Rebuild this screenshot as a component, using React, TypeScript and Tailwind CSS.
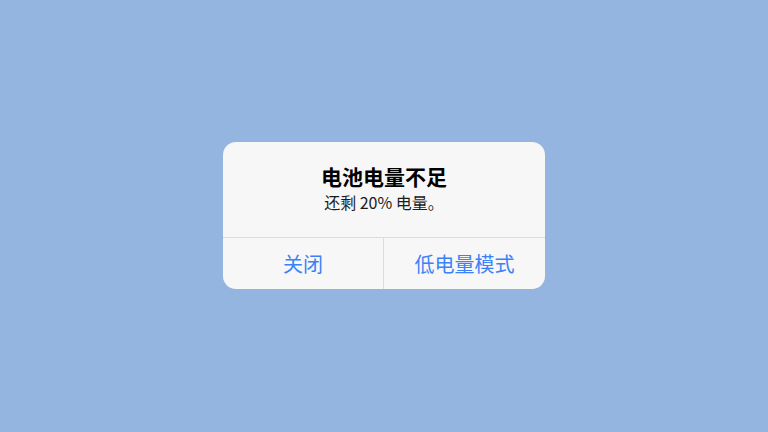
import React from "react";

const cjk = "font-['Noto_Sans_CJK_SC',_'Noto_Sans',_sans-serif]";

const AlertDialog = () => {
  return (
    <div className={`w-[322px] rounded-[13px] bg-[#f7f7f7] overflow-hidden ${cjk}`}>
      <div className="flex flex-col items-center h-[95px] pt-[20px]">
        <h2 className="text-[21px] leading-[29px] font-semibold text-black">电池电量不足</h2>
        <p className="text-[16px] leading-[22px] text-[#1c1c1c]">还剩 20% 电量。</p>
      </div>
      <div className="grid grid-cols-2 border-t border-[#dcdcdc] h-[52px]">
        <button className="text-[20px] text-[#3a82f7] border-r border-[#dcdcdc]">关闭</button>
        <button className="text-[20px] text-[#3a82f7]">低电量模式</button>
      </div>
    </div>
  );
};

export default function App() {
  return (
    <div className="w-[768px] h-[432px] bg-[#95b5e1] flex items-start justify-center pt-[142px]">
      <AlertDialog />
    </div>
  );
}
